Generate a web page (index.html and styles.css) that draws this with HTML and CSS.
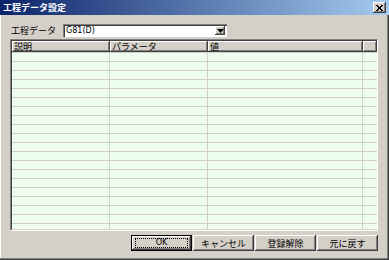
FILE: index.html
```html
<!DOCTYPE html>
<html lang="ja">
<head>
    <meta charset="UTF-8">
    <title>工程データ設定</title>
    <link rel="stylesheet" href="styles.css">
</head>
<body>
    <div class="window">
        <div class="titlebar">
            <span class="title">工程データ設定</span>
            <span class="close">
                <svg width="7" height="6" viewBox="0 0 7 6"><path d="M0 0 L6 6 M1 0 L7 6 M6 0 L0 6 M7 0 L1 6" stroke="#000" stroke-width="1" fill="none"/></svg>
            </span>
        </div>

        <div class="content">
            <div class="field-row">
                <span class="label">工程データ</span>
                <div class="combo">
                    <span class="combo-text">G81(D)</span>
                    <span class="combo-btn">
                        <svg width="7" height="4" viewBox="0 0 7 4"><path d="M0 0 H7 L3.5 4 Z" fill="#000"/></svg>
                    </span>
                </div>
            </div>

            <div class="grid">
                <div class="grid-head">
                    <div class="hcell c1">説明</div>
                    <div class="hcell c2">パラメータ</div>
                    <div class="hcell c3">値</div>
                    <div class="hcell c4"></div>
                </div>
                <div class="grid-body">
                    <div class="col c1"></div>
                    <div class="col c2"></div>
                    <div class="col c3"></div>
                    <div class="col c4"></div>
                </div>
            </div>

            <div class="buttons">
                <button class="btn default"><span class="focus">OK</span></button>
                <button class="btn">キャンセル</button>
                <button class="btn">登録解除</button>
                <button class="btn">元に戻す</button>
            </div>
        </div>
    </div>
</body>
</html>
```

FILE: styles.css
```css
body {
    margin: 0;
    padding: 0;
    font-family: "Noto Sans CJK JP", "DejaVu Sans", sans-serif;
    font-size: 9px;
    color: #000;
    background: #d4d0c8;
}
.window {
    width: 389px;
    height: 260px;
    box-sizing: border-box;
    background: #d4d0c8;
    box-shadow: inset -1px -1px #404040, inset -2px -2px #808080, inset 1px 0 #ffffff;
}
.titlebar {
    height: 15px;
    display: flex;
    align-items: center;
    justify-content: space-between;
    padding: 0 3px 0 3px;
    background: linear-gradient(to right, #0a246a, #a6caf0);
    color: #fff;
}
.title {
    font-weight: bold;
    font-size: 9px;
    line-height: 15px;
}
.close {
    width: 13px;
    height: 11px;
    box-sizing: border-box;
    display: flex;
    align-items: center;
    justify-content: center;
    background: #d4d0c8;
    box-shadow: inset -1px -1px #404040, inset 1px 1px #ffffff, inset -2px -2px #808080;
}
.content {
    padding: 9px 11px 0 10px;
}
.field-row {
    display: flex;
    align-items: center;
    height: 13px;
}
.label {
    width: 53px;
    padding-left: 1px;
    box-sizing: border-box;
}
.combo {
    width: 164px;
    height: 13px;
    box-sizing: border-box;
    display: flex;
    align-items: center;
    justify-content: space-between;
    background: #fff;
    box-shadow: inset 1px 1px #808080, inset 2px 2px #404040, inset -1px -1px #ffffff;
    padding: 2px 2px 2px 3px;
    font-family: "DejaVu Sans", sans-serif;
    font-size: 8px;
}
.combo-btn {
    width: 10px;
    height: 9px;
    box-sizing: border-box;
    display: flex;
    align-items: center;
    justify-content: center;
    background: #d4d0c8;
    box-shadow: inset -1px -1px #404040, inset 1px 1px #ffffff, inset -2px -2px #808080;
}
.grid {
    margin-top: 2px;
    height: 192px;
    box-sizing: border-box;
    border-top: 1px solid #808080;
    border-left: 1px solid #808080;
    border-right: 1px solid #ffffff;
    border-bottom: 1px solid #ffffff;
    display: flex;
    flex-direction: column;
}
.grid-head {
    display: flex;
    height: 12px;
    border-top: 1px solid #404040;
    border-left: 1px solid #404040;
}
.hcell {
    box-sizing: border-box;
    height: 11px;
    line-height: 11px;
    padding-left: 2px;
    background: #d4d0c8;
    box-shadow: inset -1px -1px #404040, inset 1px 1px #ffffff, inset -2px -2px #808080;
    white-space: nowrap;
}
.c1 { width: 98px; }
.c2 { width: 98px; }
.c3 { width: 155px; }
.c4 { flex: 1; }
.grid-body {
    flex: 1;
    display: flex;
    border-left: 1px solid #404040;
    border-bottom: 1px solid #d4d0c8;
    overflow: hidden;
}
.col {
    box-sizing: border-box;
    border-right: 1px solid #d4d0c8;
    background: repeating-linear-gradient(to bottom, #eefeee 0, #eefeee 8px, #d4d0c8 8px, #d4d0c8 9px);
}
.col.c4 {
    border-right: none;
}
.buttons {
    display: flex;
    justify-content: flex-end;
    gap: 1px;
    margin-top: 4px;
}
.btn {
    width: 61px;
    height: 16px;
    box-sizing: border-box;
    margin: 0;
    padding: 0;
    border: none;
    background: #d4d0c8;
    font-family: "Noto Sans CJK JP", "DejaVu Sans", sans-serif;
    font-size: 9px;
    color: #000;
    box-shadow: inset -1px -1px #404040, inset 1px 1px #ffffff, inset -2px -2px #808080;
}
.btn.default {
    box-shadow: inset 0 0 0 1px #000, inset -2px -2px #404040, inset 2px 2px #ffffff, inset -3px -3px #808080;
    display: flex;
    align-items: center;
    justify-content: center;
}
.focus {
    box-sizing: border-box;
    width: 53px;
    height: 10px;
    line-height: 8px;
    border: 1px dotted #000;
    font-family: "DejaVu Sans", sans-serif;
    font-size: 8px;
}
```
